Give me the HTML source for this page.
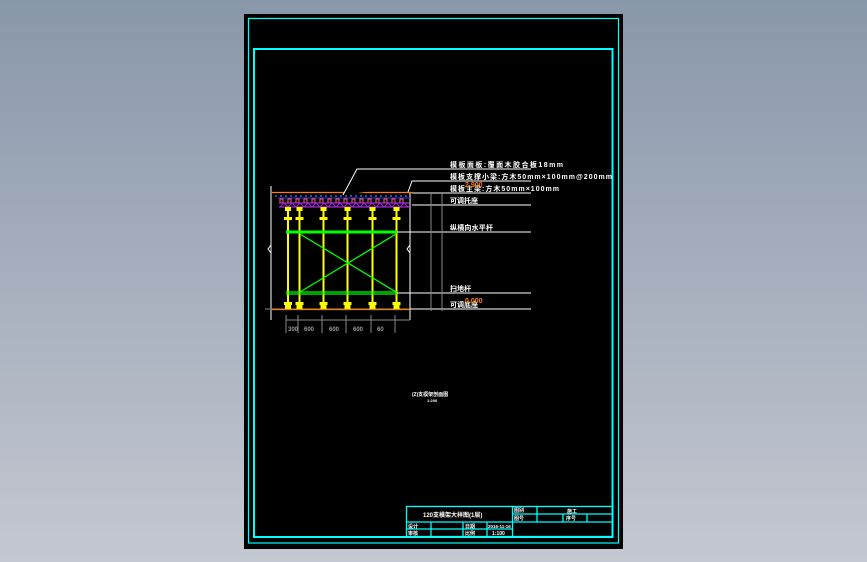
<!DOCTYPE html>
<html><head><meta charset="utf-8"><style>
html,body{margin:0;padding:0;width:867px;height:562px;overflow:hidden;background:linear-gradient(#8997aa,#c4c8d1);}
svg{position:absolute;left:0;top:0}
text{font-family:"Liberation Sans","Noto Sans CJK SC",sans-serif;fill:#fff;font-weight:bold}
</style></head><body>
<svg width="867" height="562" viewBox="0 0 867 562">
<rect x="244" y="14" width="379" height="535" fill="#000"/>
<rect x="248.5" y="18.5" width="370" height="524.5" fill="none" stroke="#00ffff" stroke-width="1.2"/>
<rect x="254" y="49" width="358.5" height="488" fill="none" stroke="#00ffff" stroke-width="2"/>
<g stroke-width="1">
<line x1="271" y1="186" x2="271" y2="320" stroke="#fff"/>
<line x1="410" y1="186" x2="410" y2="320" stroke="#fff"/>
<path d="M271 245 l-3 4 l3 4 M410 245 l-3 4 l3 4" stroke="#fff" fill="none"/>
<line x1="272" y1="192.5" x2="412" y2="192.5" stroke="#ff8000" stroke-width="1.3"/>
<line x1="275" y1="196" x2="410" y2="196" stroke="#44aaff" stroke-dasharray="2,3"/>
<line x1="278" y1="198" x2="410" y2="198" stroke="#3333ff"/>
<path d="M280 203 v-4 h3 v4 M288 203 v-4 h3 v4 M296 203 v-4 h3 v4 M304 203 v-4 h3 v4 M312 203 v-4 h3 v4 M320 203 v-4 h3 v4 M328 203 v-4 h3 v4 M336 203 v-4 h3 v4 M344 203 v-4 h3 v4 M352 203 v-4 h3 v4 M360 203 v-4 h3 v4 M368 203 v-4 h3 v4 M376 203 v-4 h3 v4 M384 203 v-4 h3 v4 M392 203 v-4 h3 v4 M400 203 v-4 h3 v4" stroke="#ff6666" fill="none"/>
<line x1="279" y1="203" x2="409" y2="203" stroke="#cc33ff"/>
<line x1="279" y1="207" x2="409" y2="207" stroke="#cc33ff"/>
<path d="M280 207 l4 -4 l4 4 l4 -4 l4 4 l4 -4 l4 4 l4 -4 l4 4 l4 -4 l4 4 l4 -4 l4 4 l4 -4 l4 4 l4 -4 l4 4 l4 -4 l4 4 l4 -4 l4 4 l4 -4 l4 4 l4 -4 l4 4 l4 -4 l4 4 l4 -4 l4 4 l4 -4 l4 4 l4 -4 l4 4" stroke="#a020f0" fill="none"/>
<line x1="265" y1="309" x2="410" y2="309" stroke="#888"/>
<line x1="272" y1="309.5" x2="410" y2="309.5" stroke="#ff8000" stroke-width="1.3"/>
</g>
<g fill="#ffff00">
<rect x="287" y="207" width="2" height="100"/><rect x="298.5" y="207" width="2" height="100"/>
<rect x="322.5" y="207" width="2" height="100"/><rect x="346.5" y="207" width="2" height="100"/>
<rect x="371.5" y="207" width="2" height="100"/><rect x="395.5" y="207" width="2" height="100"/>
<g id="c"><rect x="285" y="207" width="6" height="4"/><rect x="284" y="217" width="8" height="3"/><rect x="284" y="302" width="8" height="3"/><rect x="285" y="305" width="6" height="4"/></g>
<use href="#c" x="11.5"/><use href="#c" x="35.5"/><use href="#c" x="59.5"/><use href="#c" x="84.5"/><use href="#c" x="108.5"/>
</g>
<g stroke="#00ff00">
<line x1="286" y1="232" x2="397" y2="232" stroke-width="3"/>
<line x1="286" y1="292" x2="397" y2="292" stroke-width="1.3"/>
<line x1="286" y1="294" x2="397" y2="294" stroke-width="1.3"/>
<line x1="300" y1="234" x2="396" y2="292" stroke-width="1.3"/>
<line x1="396" y1="234" x2="300" y2="292" stroke-width="1.3"/>
</g>
<g stroke="#fff" stroke-width="1">
<path d="M343 195 L357 169 L531 169"/>
<path d="M408 192 L412 181 L531 181"/>
<line x1="412" y1="193" x2="531" y2="193"/>
<line x1="412" y1="205" x2="531" y2="205"/>
<line x1="397" y1="232" x2="531" y2="232"/>
<line x1="397" y1="293" x2="531" y2="293"/>
<line x1="410" y1="309" x2="531" y2="309"/>
</g>
<g stroke="#888" stroke-width="1" fill="none">
<line x1="431" y1="193" x2="431" y2="311"/><line x1="442" y1="193" x2="442" y2="311"/>
<line x1="286" y1="320" x2="410" y2="320"/>
<path d="M286 315v18M298 315v18M322 315v18M346 315v18M371 315v18M395 315v18"/>
</g>
<g font-size="6">
<text x="288" y="331" style="fill:#999">300</text><text x="304" y="331" style="fill:#999">600</text><text x="329" y="331" style="fill:#999">600</text><text x="353" y="331" style="fill:#999">600</text><text x="377" y="331" style="fill:#999">60</text>
</g>
<g font-size="7">
<text x="450" y="167" textLength="113" lengthAdjust="spacing">模板面板:覆面木胶合板18mm</text>
<text x="450" y="179" textLength="162" lengthAdjust="spacing">模板支撑小梁:方木50mm×100mm@200mm</text>
<text x="450" y="191" textLength="109" lengthAdjust="spacing">模板主梁:方木50mm×100mm</text>
<text x="450" y="203" textLength="28" lengthAdjust="spacing">可调托座</text>
<text x="450" y="230" textLength="43" lengthAdjust="spacing">纵横向水平杆</text>
<text x="450" y="291" textLength="21" lengthAdjust="spacing">扫地杆</text>
<text x="450" y="307" textLength="28" lengthAdjust="spacing">可调底座</text>
<text x="465" y="187" style="fill:#ff8000" font-weight="normal">2.900</text>
<text x="465" y="303" style="fill:#ff8000" font-weight="normal">0.000</text>
<text x="412" y="396" font-size="5">(2)支模架剖面图</text>
<text x="427" y="402" font-size="4">1:200</text>
</g>
<g stroke="#00ffff" stroke-width="1.3" fill="none">
<rect x="406.5" y="506.5" width="206" height="30"/>
<line x1="406" y1="522" x2="612" y2="522"/>
<line x1="406" y1="529" x2="513" y2="529"/>
<line x1="512.5" y1="506" x2="512.5" y2="536"/>
<line x1="513" y1="514" x2="612" y2="514"/>
<line x1="537" y1="506" x2="537" y2="522"/>
<line x1="563" y1="514" x2="563" y2="522"/>
<line x1="587" y1="514" x2="587" y2="522"/>
<line x1="431" y1="522" x2="431" y2="536"/>
<line x1="463" y1="522" x2="463" y2="536"/>
<line x1="487" y1="522" x2="487" y2="536"/>
</g>
<g font-size="6">
<text x="423" y="517">120支模架大样图(1层)</text>
<text x="514" y="512" font-size="5">图别</text><text x="514" y="520" font-size="5">图号</text>
<text x="567" y="513" font-size="5">施工</text><text x="566" y="520" font-size="5">序号</text>
<text x="408" y="528" font-size="5">设计</text><text x="408" y="535" font-size="5">审核</text>
<text x="465" y="528" font-size="5">日期</text><text x="465" y="535" font-size="5">比例</text>
<text x="488" y="528" font-size="4.5">2016-11-16</text><text x="492" y="535" font-size="5">1:100</text>
</g>
</svg>
</body></html>
